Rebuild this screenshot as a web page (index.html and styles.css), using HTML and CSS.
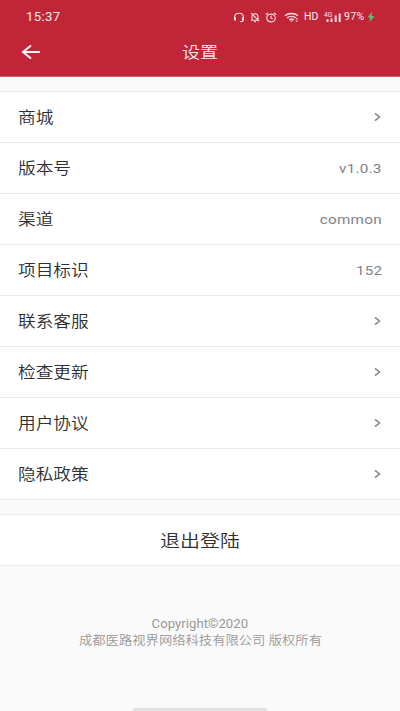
FILE: index.html
```html
<!DOCTYPE html>
<html lang="zh-CN">
<head>
<meta charset="utf-8">
<title>设置</title>
<link rel="stylesheet" href="styles.css">
</head>
<body>
<header class="header">
  <div class="status">
    <span class="time">15:37</span>
    <div class="indicators">
      <svg class="headset" width="12" height="11" viewBox="0 0 12 11"><path d="M1.500 7V5.200C1.500 2.500 3.500 1.200 6 1.200s4.500 1.300 4.500 4V7.500c0 1.500-1.500 2.200-3.500 2.200"/><path class="thick" d="M2 5.200v3.300M10 5.200v3.300"/></svg>
      <svg class="bell" width="10" height="11" viewBox="0 0 10 11"><path d="M2 7.800V5C2 3 3 1.700 5 1.700S8 3 8 5v2.800M.8 8.200h8.400M4 9.800h2M1.200 1.200l7.800 8"/></svg>
      <svg class="alarm" width="12" height="11" viewBox="0 0 12 11"><ellipse cx="6" cy="6" rx="4.300" ry="3.900"/><path d="M6 3.800V6l1.600 1M.8 2.500L3 1M11.200 2.500L9 1"/></svg>
      <svg class="wifi" width="16" height="11" viewBox="0 0 16 11"><path class="arc" d="M1 3.700C4.500.7 10.500.7 14 3.700M3.200 5.900C5.500 3.900 9.500 3.900 11.800 5.900M5.300 7.900c1.200-1 3.200-1 4.400 0"/><path class="fill" d="M6 8.500h3L7.500 10zM11.500 7.300l1.300-1.500 1.300 1.500zM11.500 8.500h2.700L12.900 10z"/></svg>
      <span class="hd">HD</span>
      <span class="mobile">
        <span class="network">4G</span>
        <svg width="18" height="11" viewBox="0 0 18 11"><path class="fill" d="M2.500 7.200h2V10h-2zM6.500 6.500h2V10h-2zM10.700 3.500h2V10h-2zM14.700 1.500h2V10h-2z"/></svg>
      </span>
      <span class="battery">97%</span>
      <svg class="bolt" width="8" height="10" viewBox="0 0 8 10"><path d="M5 0L.5 5.500h2.700L2.500 10 7.500 4.200H4.700z"/></svg>
    </div>
  </div>
  <div class="titlebar">
    <svg class="back" width="20" height="16" viewBox="0 0 20 16"><path d="M19 8H2M10 1.500L2 8l8 6.500"/></svg>
    <h1 class="title">设置</h1>
  </div>
</header>
<main>
  <ul class="list">
    <li class="row"><span class="label">商城</span><svg class="chevron" width="7" height="10" viewBox="0 0 7 10"><path d="M1 1.300L5.500 5 1 8.700"/></svg></li>
    <li class="row"><span class="label">版本号</span><span class="value">v1.0.3</span></li>
    <li class="row"><span class="label">渠道</span><span class="value">common</span></li>
    <li class="row"><span class="label">项目标识</span><span class="value">152</span></li>
    <li class="row"><span class="label">联系客服</span><svg class="chevron" width="7" height="10" viewBox="0 0 7 10"><path d="M1 1.300L5.500 5 1 8.700"/></svg></li>
    <li class="row"><span class="label">检查更新</span><svg class="chevron" width="7" height="10" viewBox="0 0 7 10"><path d="M1 1.300L5.500 5 1 8.700"/></svg></li>
    <li class="row"><span class="label">用户协议</span><svg class="chevron" width="7" height="10" viewBox="0 0 7 10"><path d="M1 1.300L5.500 5 1 8.700"/></svg></li>
    <li class="row"><span class="label">隐私政策</span><svg class="chevron" width="7" height="10" viewBox="0 0 7 10"><path d="M1 1.300L5.500 5 1 8.700"/></svg></li>
  </ul>
  <div class="logout"><span class="logout-text">退出登陆</span></div>
</main>
<footer class="footer">
  <p class="copyright">Copyright©2020</p>
  <p class="company">成都医路视界网络科技有限公司 版权所有</p>
</footer>
<div class="home-bar"></div>
</body>
</html>
```

FILE: styles.css
```css
* { box-sizing: border-box; margin: 0; padding: 0; }
body {
  display: flex;
  flex-direction: column;
  height: 711px;
  overflow: hidden;
  background: #fafafa;
  font-family: Roboto, "Noto Sans CJK SC", sans-serif;
}
svg { display: block; flex: none; }
.header { height: 77px; background: #c02637; border-bottom: 1px solid #cd6873; color: #fbe9eb; }
.status { display: flex; justify-content: space-between; height: 33px; padding: 1px 25px 0 26px; align-items: center; }
.time { font-size: 12px; line-height: 32px; letter-spacing: .3px; transform: scaleX(1.1); transform-origin: left; }
.indicators { display: flex; align-items: center; }
.indicators svg { fill: none; stroke: #f8dfe2; stroke-width: 1.1; }
.indicators .thick { stroke-width: 2; }
.indicators .arc { stroke-width: 1.400; }
.indicators .fill { fill: #f8dfe2; stroke: none; }
.bell { margin-left: 5px; }
.alarm { margin-left: 5px; }
.wifi { margin-left: 7px; }
.hd { width: 14px; margin-left: 4px; font-size: 10.500px; line-height: 12px; }
.mobile { position: relative; width: 18px; margin-left: 6px; }
.network { position: absolute; left: 0; top: 0; font-size: 6.500px; line-height: 6px; }
.battery { width: 22px; margin-left: 2px; font-size: 10.500px; line-height: 12px; letter-spacing: .4px; }
.indicators .bolt { margin-left: 1px; fill: #58c777; stroke: none; }
.titlebar { display: grid; grid-template-columns: 60px 1fr 60px; align-items: center; height: 36px; }
.back { margin: 0 0 1px 21px; fill: none; stroke: #fff3f4; stroke-width: 2; }
.title { padding-top: 2px; font-size: 16px; font-weight: 350; line-height: 36px; text-align: center; transform: scaleX(1.13); }
.list { margin-top: 14px; border-top: 1px solid #ebebeb; list-style: none; }
.row {
  display: flex;
  align-items: center;
  justify-content: space-between;
  height: 51px;
  padding: 0 18px;
  border-bottom: 1px solid #ebebeb;
  background: #fff;
}
.label { padding-bottom: 2px; color: #2d2f33; font-size: 15.500px; font-weight: 350; transform: scaleX(1.14); transform-origin: left; }
.value { padding-bottom: 1px; color: #808388; font-size: 13.500px; letter-spacing: .2px; transform: scaleX(1.13); transform-origin: right; }
.chevron { margin-right: 1px; fill: none; stroke: #858585; stroke-width: 1.500; }
.logout {
  display: flex;
  align-items: center;
  justify-content: center;
  height: 52px;
  margin-top: 14px;
  border: solid #ebebeb;
  border-width: 1px 0;
  background: #fff;
}
.logout-text { padding-bottom: 2px; color: #303030; font-size: 17.500px; font-weight: 350; transform: scaleX(1.14); }
.footer {
  display: flex;
  flex-direction: column;
  align-items: center;
  margin-top: 50px;
  color: #999;
  font-size: 12px;
  line-height: 17px;
}
.copyright { transform: scaleX(1.1); }
.company { font-weight: 350; transform: scaleX(1.11); }
.home-bar { width: 134px; height: 3px; margin: auto auto 0; border-radius: 2px 2px 0 0; background: #e1e1e1; }
```
